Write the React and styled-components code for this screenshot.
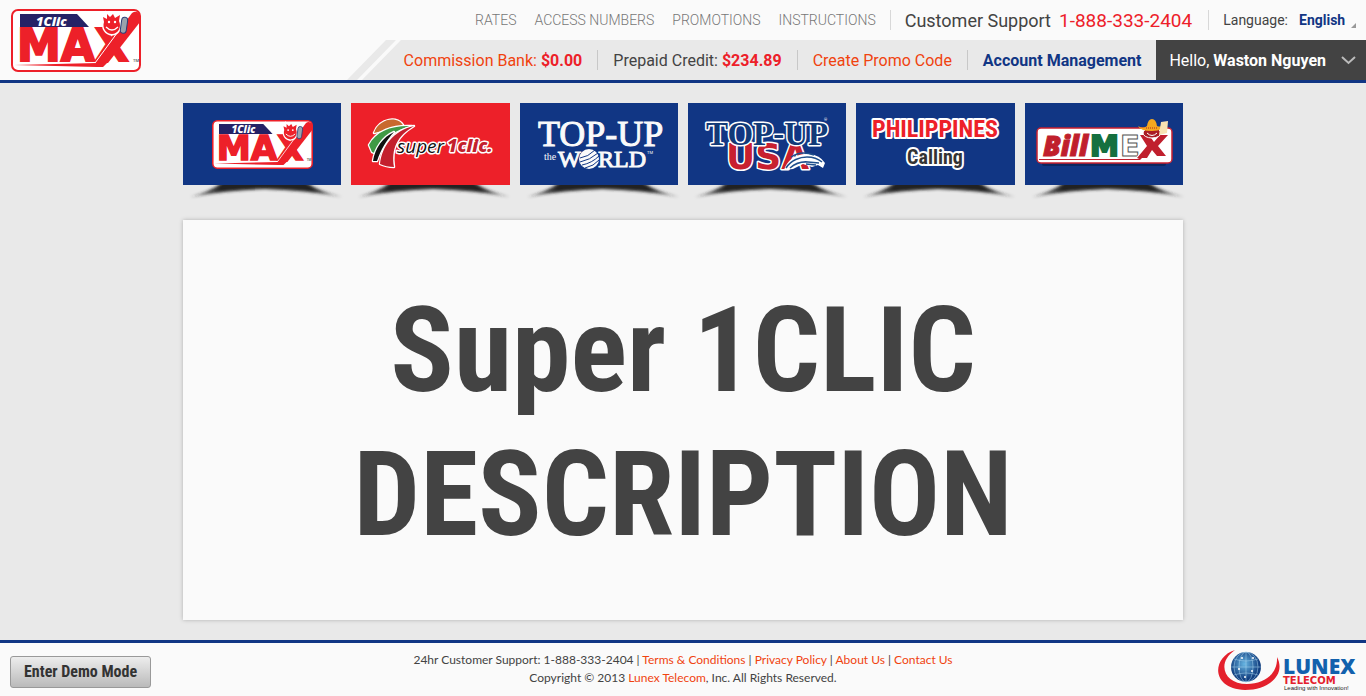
import React from "react";
import styled, { createGlobalStyle } from "styled-components";

const navy = "#113684";
const red = "#ed2029";
const orange = "#f0430f";
const ink = "#434343";

const GlobalStyle = createGlobalStyle`
  *, *::before, *::after { box-sizing: border-box; }
  body {
    margin: 0;
    background: #e9e9e9;
    color: ${ink};
    font-family: Roboto, "Liberation Sans", sans-serif;
  }
  a { text-decoration: none; color: inherit; }
  svg { display: block; overflow: visible; }
`;

const Page = styled.div`
  min-height: 100vh;
  display: flex;
  flex-direction: column;
`;

const Header = styled.header`
  display: flex;
  justify-content: space-between;
  background: #fafafa;
  border-bottom: 3px solid ${navy};
`;

const Brand = styled.a`
  padding: 9px 0 0 11px;
`;

const HeaderRows = styled.div`
  display: flex;
  flex-direction: column;
  align-items: flex-end;
`;

const TopRow = styled.div`
  display: flex;
  align-items: center;
  height: 40px;
  padding-right: 10px;
`;

const Nav = styled.nav`
  display: flex;
  gap: 18px;
  padding-right: 14px;
  font-size: 14px;
  font-weight: 300;
  color: #777;
`;

const TopCell = styled.div`
  display: flex;
  align-items: center;
  height: 20px;
  border-left: 1px solid #d8d8d8;
  white-space: nowrap;
`;

const Support = styled(TopCell)`
  gap: 8px;
  padding: 0 16px 0 14px;
  font-size: 18px;
`;

const Phone = styled.a`
  font-size: 19px;
  color: ${red};
`;

const Language = styled(TopCell)`
  gap: 11px;
  padding-left: 14px;
  font-size: 14px;
`;

const LanguagePicker = styled.div`
  position: relative;
  display: flex;
  padding-right: 10px;

  &::after {
    content: "";
    position: absolute;
    right: 0;
    bottom: 0;
    border: solid transparent;
    border-width: 0 0 5px 5px;
    border-bottom-color: #999;
  }
`;

const Select = styled.select`
  appearance: none;
  border: 0;
  padding: 0;
  background: transparent;
  color: ${navy};
  font: 700 14px Roboto, sans-serif;
`;

const AccountRow = styled.div`
  display: flex;
  align-items: stretch;
  height: 40px;
`;

const AccountBar = styled.div`
  display: flex;
  align-items: center;
  padding-left: 3px;
  background: #e9e9e9;
`;

const AccountCell = styled.div`
  display: flex;
  align-items: center;
  gap: 4px;
  height: 20px;
  padding: 0 15px;
  border-left: 1px solid #c8c8c8;
  font-size: 16px;
  white-space: nowrap;

  &:first-child {
    padding-left: 0;
    border-left: 0;
  }
`;

const AccountLink = styled.a`
  color: ${(p) => (p.$strong ? navy : orange)};
  font-weight: ${(p) => (p.$strong ? 700 : 400)};
`;

const Amount = styled.strong`
  color: ${red};
`;

const UserMenu = styled.button`
  display: flex;
  align-items: center;
  gap: 15px;
  padding: 0 10px 0 13px;
  border: 0;
  background: ${ink};
  color: #fff;
  font: 400 16px Roboto, sans-serif;
`;

const Main = styled.main`
  flex: 1;
  width: 100%;
  max-width: 1000px;
  margin: 0 auto;
  padding: 20px 0;
`;

const Tiles = styled.nav`
  display: grid;
  grid-template-columns: repeat(6, 1fr);
  gap: 10px;
`;

const TileItem = styled.div`
  padding-bottom: 20px;
`;

const Tile = styled.a`
  display: flex;
  align-items: center;
  justify-content: center;
  height: 82px;
  background: ${(p) => (p.$active ? red : navy)};
`;

const Panel = styled.section`
  display: flex;
  align-items: center;
  justify-content: center;
  min-height: 400px;
  padding-top: 6px;
  background: #fafafa;
  box-shadow: 0 0 4px rgba(0, 0, 0, 0.25);
`;

const Title = styled.h1`
  margin: 0;
  font-family: "Roboto Condensed", Roboto, sans-serif;
  font-size: 118px;
  line-height: 144px;
  font-weight: 700;
  text-align: center;
`;

const Footer = styled.footer`
  display: grid;
  grid-template-columns: 1fr auto 1fr;
  align-items: center;
  min-height: 56px;
  padding: 0 10px;
  border-top: 3px solid ${navy};
  background: #fafafa;
`;

const DemoButton = styled.button`
  justify-self: start;
  height: 32px;
  padding: 0 13px;
  margin-top: 4px;
  border: 1px solid #999;
  border-radius: 3px;
  background: linear-gradient(#ededed, #bababa);
  color: #333;
  font: 700 16px "Roboto Condensed", Roboto, sans-serif;
`;

const Legal = styled.div`
  padding-bottom: 2px;
  font-family: Lato, "Open Sans", sans-serif;
  font-size: 12px;
  line-height: 18px;
  text-align: center;

  p { margin: 0; }
`;

const LegalLink = styled.a`
  color: ${orange};
`;

const FooterBrand = styled.a`
  justify-self: end;
`;

function MaxLogo({ width }) {
  return (
    <svg width={width} viewBox="0 0 130 63" role="img" aria-label="1Clic Max">
      <rect x="1" y="1" width="128" height="61" rx="6" fill="#fff" stroke={red} strokeWidth="2" />
      <path d="M9 5H66L78 18H9Z" fill="#252266" />
      <text x="25" y="17" fontFamily="Open Sans, sans-serif" fontWeight="800" fontStyle="italic" fontSize="13" fill="#fff">1Clic</text>
      <text x="6" y="52" fontFamily="DejaVu Sans, sans-serif" fontWeight="700" fontSize="44" fill={red} stroke={red} strokeWidth="2">MAX</text>
      <path d="M84 54L121 4Q125 1 129 5V13L97 54Z" fill={red} />
      <path d="M76 54L84 54L112 16" fill="none" stroke="#fff" strokeWidth="1" />
      <path d="M3 56L86 54L97 53L92 58H86Z" fill={red} />
      <text x="122" y="53" fontFamily="Roboto, sans-serif" fontSize="4" fill="#222">TM</text>
      <path d="M93 13L92 8L96 10L96 5L99 8L102 5L104 9L109 6L108 12C111 18 107 25 101 25C95 25 91 19 93 13Z" fill={red} stroke="#fff" strokeWidth="3" paintOrder="stroke" />
      <circle cx="98" cy="13" r="1.200" fill="#fff" />
      <circle cx="104" cy="13" r="1.200" fill="#fff" />
      <path d="M95 18Q101 24 107 18" fill="none" stroke="#fff" strokeWidth="1.200" />
      <rect x="110" y="8" width="6" height="16" rx="3" fill="#9aa3ad" stroke="#2b3d78" strokeWidth="1" transform="rotate(8 111 16)" />
    </svg>
  );
}

function SuperLogo() {
  return (
    <svg width="158" height="82" viewBox="0 0 158 82" role="img" aria-label="Super1clic">
      <g stroke="#fff" strokeWidth="2.500" strokeLinejoin="round" paintOrder="stroke">
        <path d="M23 30C28 15 48 12 53 24L35 27Z" fill="#c8692e" />
        <path d="M18 42C25 28 41 22 61 23C45 26 34 34 26 51L21 49Z" fill="#3f9a45" />
        <path d="M22 58C24 45 32 34 43 29C35 38 30 46 26 58Z" fill="#111" />
        <path d="M29 61C31 43 42 28 63 23C46 33 40 46 43 64Q35 64 29 61Z" fill="#c3202d" />
      </g>
      <g fontFamily="Open Sans, sans-serif" fontStyle="italic" fontSize="19" stroke="#fff" strokeWidth="3" strokeLinejoin="round" paintOrder="stroke">
        <text x="46" y="50" fill="#111">super</text>
        <text x="96" y="49" fontWeight="800" fontSize="18" fill="#c3202d">1clic.</text>
      </g>
    </svg>
  );
}

function WorldLogo() {
  return (
    <svg width="158" height="82" viewBox="0 0 158 82" role="img" aria-label="Top-Up the World">
      <g fontFamily="Liberation Serif, serif" fill="#fafafa" stroke="#fafafa">
        <text x="18" y="43" fontSize="36" strokeWidth="1">TOP-UP</text>
        <text x="24" y="57" fontSize="10" strokeWidth="0">the</text>
        <text x="38" y="64" fontSize="24" strokeWidth="1">W</text>
        <text x="78" y="64" fontSize="24" strokeWidth="1">RLD</text>
        <text x="127" y="51" fontFamily="Roboto, sans-serif" fontSize="4" strokeWidth="0">TM</text>
      </g>
      <circle cx="69" cy="56" r="10" fill="#fafafa" />
      <path d="M60 55Q68 54 75 47M60 59Q70 57 78 50M62 62Q72 60 79 53M65 65Q74 63 79 57" fill="none" stroke={navy} strokeWidth="1" />
    </svg>
  );
}

function UsaLogo() {
  return (
    <svg width="158" height="82" viewBox="0 0 158 82" role="img" aria-label="Top-Up USA">
      <g strokeLinejoin="round" paintOrder="stroke" stroke="#fff">
        <text x="38" y="66" fontFamily="DejaVu Sans, sans-serif" fontWeight="700" fontSize="36" fill="#c8202f" strokeWidth="3">USA</text>
        <text x="18" y="42" fontFamily="Liberation Serif, serif" fontWeight="700" fontSize="33" fill="#123a78" strokeWidth="3">TOP-UP</text>
      </g>
      <path d="M96 67C99 57 108 50 121 51Q132 52 137 60L135 65L130 62L124 64L115 61L105 66Z" fill="#fff" />
      <path d="M98 65C103 57 112 54 119 54Q128 54 134 59M102 65Q110 58 120 59L131 60M118 61L128 62M103 54Q113 47 126 52" fill="none" stroke="#1f4f8c" strokeWidth="1.500" />
      <text x="136" y="18" fontFamily="Roboto, sans-serif" fontSize="4" fill="#fff">®</text>
    </svg>
  );
}

function PhilippinesLogo() {
  return (
    <svg width="158" height="82" viewBox="0 0 158 82" role="img" aria-label="Philippines Calling">
      <g fontFamily="Roboto Condensed, Roboto, sans-serif" fontWeight="700" textAnchor="middle" stroke="#fff" strokeWidth="4" strokeLinejoin="round" paintOrder="stroke">
        <text x="79" y="34" fontSize="24" fill={red}>PHILIPPINES</text>
        <text x="79" y="61" fontSize="20" fill="#333">Calling</text>
      </g>
    </svg>
  );
}

function BillMexLogo() {
  return (
    <svg width="158" height="82" viewBox="0 0 158 82" role="img" aria-label="BillMex">
      <rect x="17" y="58" width="124" height="5" rx="2" fill="#0b2660" />
      <rect x="12" y="25" width="135" height="35" rx="4" fill="#fff" stroke="#c8202f" strokeWidth="1.500" />
      <g fontWeight="800">
        <text x="18" y="53" fontFamily="Open Sans, sans-serif" fontSize="28" fontStyle="italic" fill="#c01f2d" stroke="#c01f2d" strokeWidth="1">Bill</text>
        <text x="65" y="53" fontFamily="DejaVu Sans, sans-serif" fontSize="29" fill="#15703f" stroke="#15703f" strokeWidth="2">M</text>
        <text x="95" y="53" fontFamily="DejaVu Sans, sans-serif" fontSize="29" fill="#fff" stroke="#555" strokeWidth="1">E</text>
      </g>
      <path d="M115 32H124L129 39L135 32H143L133 43L141 53H132L127 47L122 55H112L122 43Z" fill="#c01f2d" stroke="#fff" strokeWidth="2" paintOrder="stroke" />
      <path d="M14 56H112L119 53L115 57H14Z" fill="#c01f2d" />
      <ellipse cx="127" cy="30" rx="9" ry="5" fill="#a91c25" stroke="#fff" strokeWidth="1" />
      <path d="M122 30Q127 35 132 30" fill="none" stroke="#fff" strokeWidth="1" />
      <path d="M113 23Q118 26 122 23Q123 16 127 16Q131 16 132 23Q137 25 141 20Q139 28 127 28Q115 28 113 23Z" fill="#f5a81f" />
      <path d="M121 25L132 25" stroke="#b3261e" strokeWidth="1" strokeDasharray="1 1" />
      <path d="M136 19L143 18L142 30L134 32Z" fill="#f7e3b3" />
    </svg>
  );
}

function LunexLogo() {
  return (
    <svg width="140" height="42" viewBox="0 0 140 42" role="img" aria-label="Lunex Telecom, Leading with Innovation!">
      <defs>
        <radialGradient id="globe" cx="45%" cy="40%">
          <stop offset="0" stopColor="#67b5e2" />
          <stop offset="1" stopColor="#123f80" />
        </radialGradient>
      </defs>
      <path d="M19 1C-4 8 -6 40 29 41C54 41 70 25 61 8C62 25 48 35 31 35C8 35 0 14 19 1Z" fill="#e4202c" />
      <circle cx="30" cy="18" r="15" fill="url(#globe)" />
      <g fill="none" stroke="#a9d5ee" strokeWidth="0.500">
        <ellipse cx="30" cy="18" rx="7" ry="15" />
        <ellipse cx="30" cy="18" rx="12" ry="15" />
        <path d="M30 3V33M15 18H45M18 10Q30 14 42 10M18 26Q30 22 42 26" />
      </g>
      <g fill="#fff">
        <circle cx="26" cy="9" r="1" /><circle cx="37" cy="9" r="1" /><circle cx="23" cy="20" r="1" />
        <circle cx="36" cy="22" r="1" /><circle cx="29" cy="28" r="1" />
      </g>
      <text x="67" y="25" fontFamily="Open Sans, sans-serif" fontWeight="800" fontSize="21" fill="#1261ad">LUNEX</text>
      <text x="67" y="35" fontFamily="DejaVu Sans, sans-serif" fontWeight="700" fontSize="10" fill="#e4202c">TELECOM</text>
      <text x="68" y="41" fontFamily="Liberation Sans, sans-serif" fontSize="6" fill="#222">Leading with Innovation!</text>
    </svg>
  );
}

function TileShadow({ id }) {
  return (
    <svg width="100%" height="15" viewBox="0 0 158 15" preserveAspectRatio="none" aria-hidden="true">
      <defs>
        <filter id={`blur-${id}`} x="-10%" y="-50%" width="120%" height="200%">
          <feGaussianBlur stdDeviation="1.500" />
        </filter>
        <clipPath id={`clip-${id}`}><rect x="-5" y="0" width="172" height="20" /></clipPath>
        <linearGradient id={`fade-${id}`}>
          <stop offset="0" stopColor="#222" stopOpacity="0.400" />
          <stop offset="0.200" stopColor="#222" />
          <stop offset="0.800" stopColor="#222" />
          <stop offset="1" stopColor="#222" stopOpacity="0.400" />
        </linearGradient>
      </defs>
      <g clipPath={`url(#clip-${id})`}>
        <path d="M7 12Q26 7 40 -3H122Q137 7 159 12Q122 5 82 4Q44 5 7 12Z" fill={`url(#fade-${id})`} filter={`url(#blur-${id})`} />
      </g>
    </svg>
  );
}

const links = ["RATES", "ACCESS NUMBERS", "PROMOTIONS", "INSTRUCTIONS"];

const products = [
  { id: "max", logo: <MaxLogo width={101} /> },
  { id: "super", logo: <SuperLogo />, active: true },
  { id: "world", logo: <WorldLogo /> },
  { id: "usa", logo: <UsaLogo /> },
  { id: "philippines", logo: <PhilippinesLogo /> },
  { id: "billmex", logo: <BillMexLogo /> },
];

export default function App() {
  return (
    <Page>
      <GlobalStyle />
      <Header>
        <Brand href="#home"><MaxLogo width={130} /></Brand>
        <HeaderRows>
          <TopRow>
            <Nav>
              {links.map((label) => <a key={label} href="#info">{label}</a>)}
            </Nav>
            <Support>
              <span>Customer Support</span>
              <Phone href="tel:18883332404">1-888-333-2404</Phone>
            </Support>
            <Language>
              <label htmlFor="language">Language:</label>
              <LanguagePicker>
                <Select id="language" defaultValue="en"><option value="en">English</option></Select>
              </LanguagePicker>
            </Language>
          </TopRow>
          <AccountRow>
            <svg width="54" height="40" viewBox="0 0 54 40" aria-hidden="true">
              <path d="M39 0H49L10 40H0ZM54 0V40H15Z" fill="#e9e9e9" />
            </svg>
            <AccountBar>
              <AccountCell>
                <AccountLink href="#commission">Commission Bank:</AccountLink>
                <Amount>$0.00</Amount>
              </AccountCell>
              <AccountCell>
                <span>Prepaid Credit:</span>
                <Amount>$234.89</Amount>
              </AccountCell>
              <AccountCell><AccountLink href="#promo">Create Promo Code</AccountLink></AccountCell>
              <AccountCell><AccountLink $strong href="#account">Account Management</AccountLink></AccountCell>
            </AccountBar>
            <UserMenu type="button">
              <span>Hello, <strong>Waston Nguyen</strong></span>
              <svg width="15" height="8" viewBox="0 0 15 8" aria-hidden="true">
                <path d="M1 1L7.500 7L14 1" fill="none" stroke="#bbb" strokeWidth="2" />
              </svg>
            </UserMenu>
          </AccountRow>
        </HeaderRows>
      </Header>
      <Main>
        <Tiles aria-label="Products">
          {products.map((product) => (
            <TileItem key={product.id}>
              <Tile href={`#${product.id}`} $active={product.active}>{product.logo}</Tile>
              <TileShadow id={product.id} />
            </TileItem>
          ))}
        </Tiles>
        <Panel>
          <Title>Super 1CLIC DESCRIPTION</Title>
        </Panel>
      </Main>
      <Footer>
        <DemoButton type="button">Enter Demo Mode</DemoButton>
        <Legal>
          <p>
            24hr Customer Support: 1-888-333-2404 | <LegalLink href="#terms">Terms &amp; Conditions</LegalLink> | <LegalLink href="#privacy">Privacy Policy</LegalLink> | <LegalLink href="#about">About Us</LegalLink> | <LegalLink href="#contact">Contact Us</LegalLink>
          </p>
          <p>Copyright © 2013 <LegalLink href="#lunex">Lunex Telecom</LegalLink>, Inc. All Rights Reserved.</p>
        </Legal>
        <FooterBrand href="#lunex"><LunexLogo /></FooterBrand>
      </Footer>
    </Page>
  );
}
